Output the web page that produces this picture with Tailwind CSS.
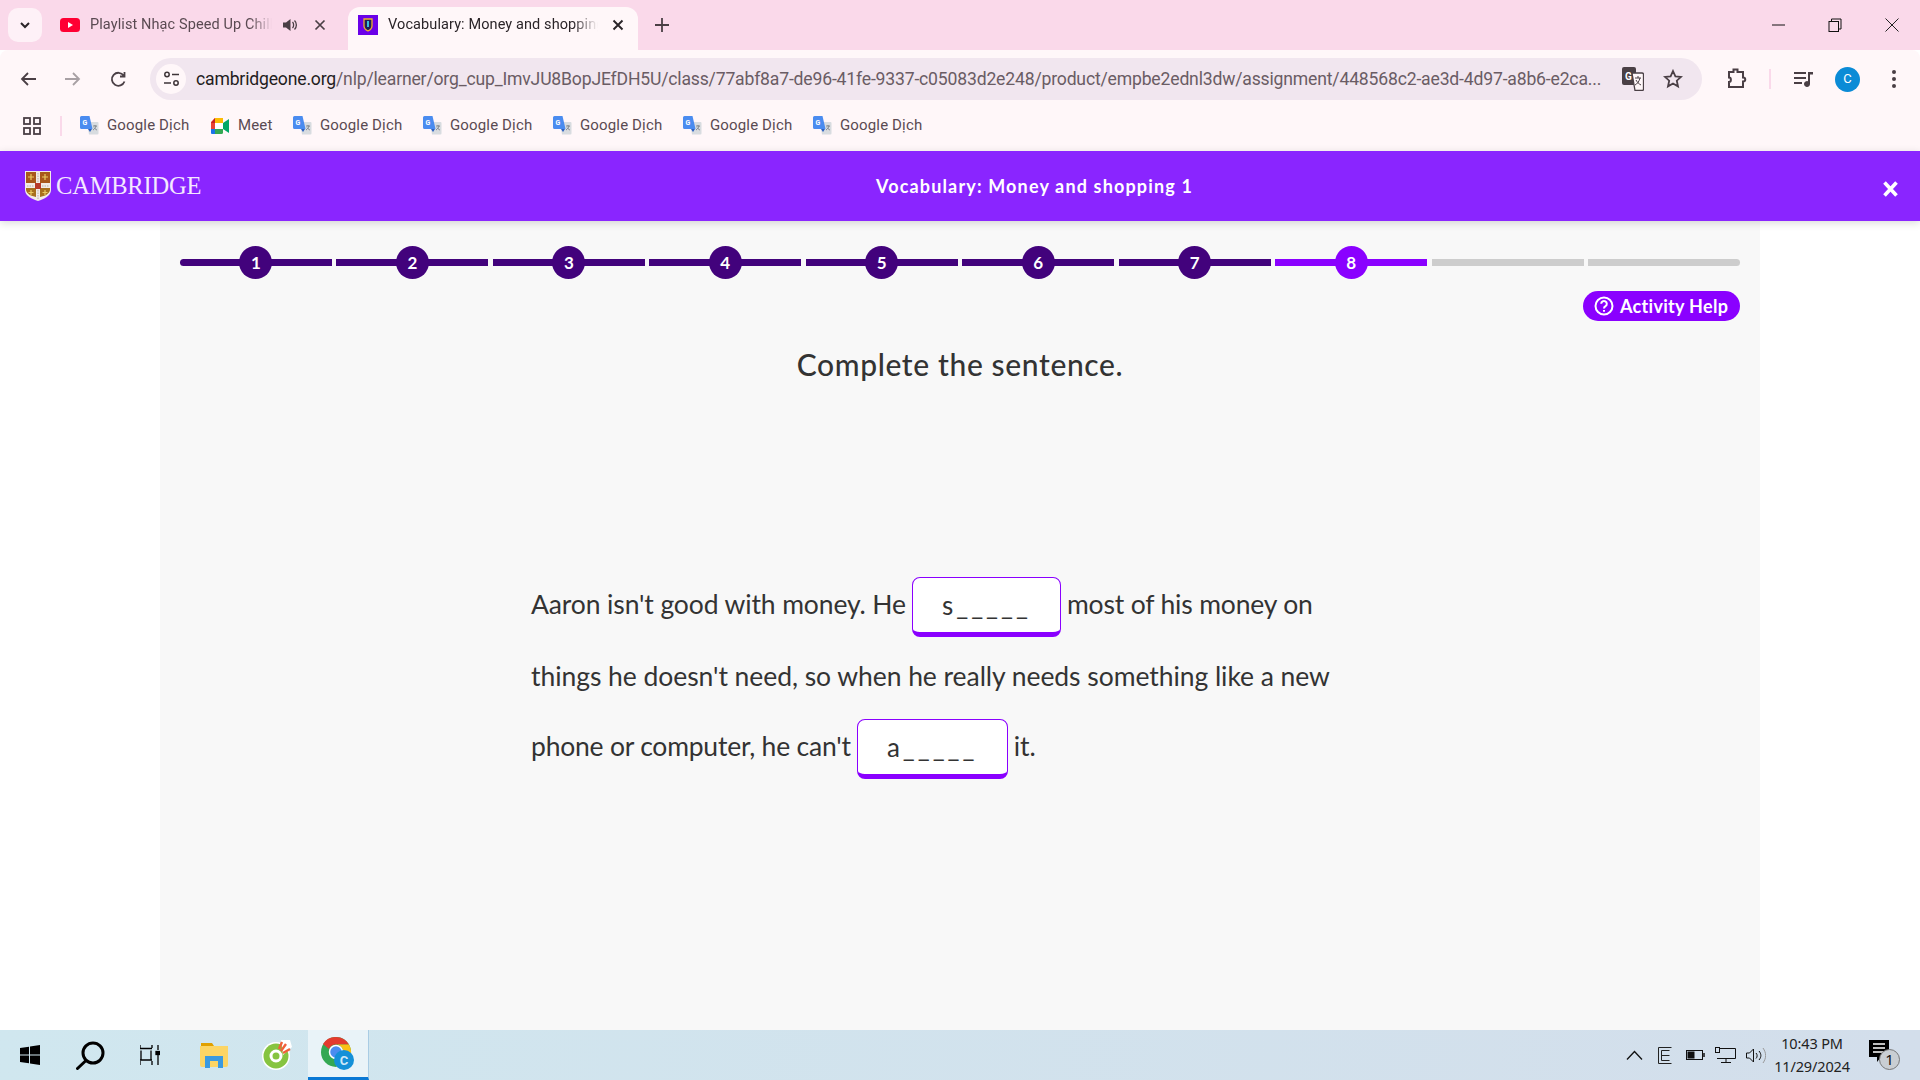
<!DOCTYPE html>
<html><head><meta charset="utf-8"><title>Vocabulary</title>
<script src="https://cdn.jsdelivr.net/npm/@tailwindcss/browser@4"></script></head>
<body class="bg-white overflow-hidden font-['Roboto',sans-serif]">
<div class="w-[1920px] h-[1080px] flex flex-col overflow-hidden">

<!-- tab strip -->
<div class="h-[50px] bg-[#fad9ea] flex items-end relative shrink-0">
  <div class="absolute left-[8px] top-[8px] w-[34px] h-[34px] rounded-[10px] bg-[#fef1f7] flex items-center justify-center">
    <svg width="12" height="12" viewBox="0 0 12 12" fill="none" stroke="#2a2428" stroke-width="2"><path d="M2 4l4 4 4-4"/></svg>
  </div>
  <div class="ml-[60px] w-[280px] h-[43px] pb-[7px] flex items-center text-[14.5px] tracking-[.1px] text-[#5a4a52]">
    <svg width="20" height="14" viewBox="0 0 20 14"><rect width="20" height="14" rx="3.5" fill="#ff0033"/><path d="M8 4l5 3-5 3z" fill="#fff"/></svg>
    <span class="ml-[10px] w-[182px] whitespace-nowrap overflow-hidden [mask-image:linear-gradient(90deg,#000_88%,transparent)]">Playlist Nhạc Speed Up Chill</span>
    <svg class="ml-[10px]" width="16" height="16" viewBox="0 0 16 16" fill="#4a3f45"><path d="M1 5.5h3L8.500 2v12L4 10.500H1z"/><path d="M10.500 5c1.500 1.500 1.500 4.500 0 6M12.500 3.500c2.500 2.500 2.500 6.500 0 9" fill="none" stroke="#4a3f45" stroke-width="1.300"/></svg>
    <svg class="ml-[16px]" width="12" height="12" viewBox="0 0 12 12" stroke="#4a3f45" stroke-width="1.700"><path d="M1.500 1.500l9 9M10.500 1.500l-9 9"/></svg>
  </div>
  <div class="ml-[8px] w-[290px] h-[43px] pb-[7px] bg-[#fff7f9] rounded-t-[12px] flex items-center text-[14.5px] tracking-[.1px] text-[#2a2428] pl-[10px]">
    <svg width="20" height="20" viewBox="0 0 20 20"><rect width="20" height="20" fill="#6a00e8"/><path d="M6 4h8v7c0 3-2 4-4 5-2-1-4-2-4-5z" fill="#1e1e5a" stroke="#f0b030" stroke-width="1.300"/><path d="M10 6v6" stroke="#38c0d8" stroke-width="2"/></svg>
    <span class="ml-[10px] w-[210px] whitespace-nowrap overflow-hidden [mask-image:linear-gradient(90deg,#000_88%,transparent)]">Vocabulary: Money and shopping 1</span>
    <svg class="ml-[14px]" width="12" height="12" viewBox="0 0 12 12" stroke="#2a2428" stroke-width="1.900"><path d="M1.500 1.500l9 9M10.500 1.500l-9 9"/></svg>
  </div>
  <svg class="ml-[17px] mb-[18px]" width="14" height="14" viewBox="0 0 14 14" stroke="#4a3f45" stroke-width="1.800"><path d="M7 0v14M0 7h14"/></svg>
  <div class="absolute right-0 top-0 h-[50px] flex items-center">
    <div class="w-[55px] flex justify-center"><svg width="13" height="2" viewBox="0 0 13 2"><path d="M0 1h13" stroke="#111" stroke-width="1"/></svg></div>
    <div class="w-[58px] flex justify-center"><svg width="14" height="14" viewBox="0 0 14 14" fill="none" stroke="#111"><rect x="1" y="3.500" width="9.500" height="10"/><path d="M3.500 3.500V1h9.500v10h-2.500"/></svg></div>
    <div class="w-[56px] flex justify-center"><svg width="14" height="14" viewBox="0 0 14 14" stroke="#222" stroke-width="1"><path d="M.5.500l13 13M13.500.500l-13 13"/></svg></div>
  </div>
</div>

<!-- toolbar -->
<div class="h-[58px] bg-[#fff7f9] rounded-t-[8px] flex items-center relative shrink-0">
  <svg class="ml-[20px]" width="16" height="16" viewBox="0 0 16 16" fill="none" stroke="#4a3f45" stroke-width="1.800"><path d="M16 8H2M8 2L2 8l6 6"/></svg>
  <svg class="ml-[29px]" width="16" height="16" viewBox="0 0 16 16" fill="none" stroke="#a8a0a4" stroke-width="1.800"><path d="M0 8h14M8 2l6 6-6 6"/></svg>
  <svg class="ml-[29px]" width="17" height="17" viewBox="0 0 17 17" fill="none" stroke="#4a3f45" stroke-width="1.800"><path d="M14.500 10.500a6.500 6.500 0 1 1-.800-6M14.500 1v4.500H10"/></svg>
  <div class="ml-[23px] w-[1552px] h-[42px] rounded-full bg-[#f1e6ef] flex items-center">
    <div class="ml-[6px] w-[30px] h-[30px] rounded-full bg-[#fff7f9] flex items-center justify-center">
      <svg width="17" height="16" viewBox="0 0 17 16" fill="none" stroke="#3e3438" stroke-width="1.500"><circle cx="4" cy="3.500" r="2.200"/><path d="M9 3.500h7M1 12h7"/><circle cx="13" cy="12" r="2.200"/></svg>
    </div>
    <span class="ml-[10px] w-[1410px] text-[17.6px] leading-[42px] tracking-[-.18px] text-[#6a5c64] whitespace-nowrap"><span class="text-[#231c20]">cambridgeone.org</span>/nlp/learner/org_cup_ImvJU8BopJEfDH5U/class/77abf8a7-de96-41fe-9337-c05083d2e248/product/empbe2ednl3dw/assignment/448568c2-ae3d-4d97-a8b6-e2ca...</span>
    <svg class="ml-[16px]" width="22" height="24" viewBox="0 0 22 24"><rect x="0" y="0" width="14" height="18" rx="2" fill="#4a4045"/><text x="3" y="13" font-size="10" font-weight="700" fill="#fff" font-family="Roboto">G</text><path d="M10 6h10a1.500 1.500 0 0 1 1.500 1.500V22a1.500 1.500 0 0 1-1.500 1.500h-7z" fill="#fff7f9" stroke="#4a4045" stroke-width="1.300"/><path d="M13 11h6M16 9v2M18 11c-1 4-3 6-5 7M14 13c1 2 3 4 5 5" stroke="#4a4045" fill="none"/></svg>
    <svg class="ml-[19px]" width="20" height="20" viewBox="0 0 20 20" fill="none" stroke="#4a3f45" stroke-width="1.800"><path d="M10 2l2.400 5.300 5.600.600-4.200 3.800 1.200 5.700-5-2.900-5 2.900 1.200-5.700L2 7.900l5.600-.600z"/></svg>
  </div>
  <svg class="ml-[25px]" width="20" height="22" viewBox="0 0 20 22" fill="none" stroke="#4a3f45" stroke-width="2"><path d="M2 4h4.500V1.500h4V4H16v5.500c3 0 3 4 0 4V19H2v-5c2.500 0 2.500-4.500 0-4.500z"/></svg>
  <div class="ml-[22px] w-[2px] h-[20px] bg-[#fad9ea]"></div>
  <svg class="ml-[23px]" width="19" height="17" viewBox="0 0 19 17" fill="#4a3f45"><path d="M0 1h12v2H0zM0 6h12v2H0zM0 11h8v2H0z"/><path d="M14 1h5v2.500h-3V13a3 3 0 1 1-2-2.800z"/></svg>
  <div class="ml-[22px] w-[25px] h-[25px] rounded-full bg-[#0b8bd6] text-white text-[13px] flex items-center justify-center">C</div>
  <svg class="ml-[32px]" width="4" height="18" viewBox="0 0 4 18" fill="#4a3f45"><circle cx="2" cy="2" r="2"/><circle cx="2" cy="9" r="2"/><circle cx="2" cy="16" r="2"/></svg>
</div>

<!-- bookmarks -->
<div class="h-[43px] pb-[8px] bg-[#fff7f9] flex items-center text-[15px] tracking-[.15px] text-[#5a4a52] shrink-0">
  <svg class="ml-[23px]" width="18" height="18" viewBox="0 0 18 18" fill="none" stroke="#4a3f45" stroke-width="1.800"><rect x="1" y="1" width="6" height="6"/><rect x="11" y="1" width="6" height="6"/><rect x="1" y="11" width="6" height="6"/><rect x="11" y="11" width="6" height="6"/></svg>
  <div class="ml-[19px] w-[2px] h-[20px] bg-[#fad9ea]"></div>
  <div class="ml-[18px] flex items-center gap-[8px]"><svg width="19" height="19" viewBox="0 0 19 19"><path d="M7 6h10.500a1 1 0 0 1 1 1v10.500a1 1 0 0 1-1 1H9z" fill="#d8dce0"/><path d="M1.500 0h8l3 13H1.500a1.500 1.500 0 0 1-1.500-1.500v-10A1.500 1.500 0 0 1 1.500 0z" fill="#4a8cf0"/><text x="2.500" y="9" font-size="7" font-weight="700" fill="#fff" font-family="Roboto">G</text><path d="M8 13h4l-2 3z" fill="#2a5fc0"/><path d="M13 10h4M15 9v1M16 10c-.500 2-1.500 3-3 4M14 11.500c.700 1 1.500 2 3 2.500" stroke="#70767c" stroke-width=".8" fill="none"/></svg><span class="w-[82px] whitespace-nowrap">Google Dịch</span></div>
  <div class="ml-[22px] flex items-center gap-[9px]"><svg width="18" height="16" viewBox="0 0 18 16"><path d="M0 4l4-4h8v5H4v6H0z" fill="#ea4335"/><path d="M4 0v5H0z" fill="#c5221f"/><path d="M4 0h8v5H4z" fill="#fbbc04"/><path d="M0 11h4v5H1a1 1 0 0 1-1-1z" fill="#1a73e8"/><path d="M4 11h8v3.500a1.500 1.500 0 0 1-1.500 1.500H4z" fill="#34a853"/><path d="M12 5v6l6 4V1z" fill="#00a866"/><path d="M4 5h8v6H4z" fill="#fff"/></svg><span class="w-[34px]">Meet</span></div>
  <div class="ml-[21px] flex items-center gap-[8px]"><svg width="19" height="19" viewBox="0 0 19 19"><path d="M7 6h10.500a1 1 0 0 1 1 1v10.500a1 1 0 0 1-1 1H9z" fill="#d8dce0"/><path d="M1.500 0h8l3 13H1.500a1.500 1.500 0 0 1-1.500-1.500v-10A1.500 1.500 0 0 1 1.500 0z" fill="#4a8cf0"/><text x="2.500" y="9" font-size="7" font-weight="700" fill="#fff" font-family="Roboto">G</text><path d="M8 13h4l-2 3z" fill="#2a5fc0"/><path d="M13 10h4M15 9v1M16 10c-.500 2-1.500 3-3 4M14 11.500c.700 1 1.500 2 3 2.500" stroke="#70767c" stroke-width=".8" fill="none"/></svg><span class="w-[82px] whitespace-nowrap">Google Dịch</span></div>
  <div class="ml-[21px] flex items-center gap-[8px]"><svg width="19" height="19" viewBox="0 0 19 19"><path d="M7 6h10.500a1 1 0 0 1 1 1v10.500a1 1 0 0 1-1 1H9z" fill="#d8dce0"/><path d="M1.500 0h8l3 13H1.500a1.500 1.500 0 0 1-1.500-1.500v-10A1.500 1.500 0 0 1 1.500 0z" fill="#4a8cf0"/><text x="2.500" y="9" font-size="7" font-weight="700" fill="#fff" font-family="Roboto">G</text><path d="M8 13h4l-2 3z" fill="#2a5fc0"/><path d="M13 10h4M15 9v1M16 10c-.500 2-1.500 3-3 4M14 11.500c.700 1 1.500 2 3 2.500" stroke="#70767c" stroke-width=".8" fill="none"/></svg><span class="w-[82px] whitespace-nowrap">Google Dịch</span></div>
  <div class="ml-[21px] flex items-center gap-[8px]"><svg width="19" height="19" viewBox="0 0 19 19"><path d="M7 6h10.500a1 1 0 0 1 1 1v10.500a1 1 0 0 1-1 1H9z" fill="#d8dce0"/><path d="M1.500 0h8l3 13H1.500a1.500 1.500 0 0 1-1.500-1.500v-10A1.500 1.500 0 0 1 1.500 0z" fill="#4a8cf0"/><text x="2.500" y="9" font-size="7" font-weight="700" fill="#fff" font-family="Roboto">G</text><path d="M8 13h4l-2 3z" fill="#2a5fc0"/><path d="M13 10h4M15 9v1M16 10c-.500 2-1.500 3-3 4M14 11.500c.700 1 1.500 2 3 2.500" stroke="#70767c" stroke-width=".8" fill="none"/></svg><span class="w-[82px] whitespace-nowrap">Google Dịch</span></div>
  <div class="ml-[21px] flex items-center gap-[8px]"><svg width="19" height="19" viewBox="0 0 19 19"><path d="M7 6h10.500a1 1 0 0 1 1 1v10.500a1 1 0 0 1-1 1H9z" fill="#d8dce0"/><path d="M1.500 0h8l3 13H1.500a1.500 1.500 0 0 1-1.500-1.500v-10A1.500 1.500 0 0 1 1.500 0z" fill="#4a8cf0"/><text x="2.500" y="9" font-size="7" font-weight="700" fill="#fff" font-family="Roboto">G</text><path d="M8 13h4l-2 3z" fill="#2a5fc0"/><path d="M13 10h4M15 9v1M16 10c-.500 2-1.500 3-3 4M14 11.500c.700 1 1.500 2 3 2.500" stroke="#70767c" stroke-width=".8" fill="none"/></svg><span class="w-[82px] whitespace-nowrap">Google Dịch</span></div>
  <div class="ml-[21px] flex items-center gap-[8px]"><svg width="19" height="19" viewBox="0 0 19 19"><path d="M7 6h10.500a1 1 0 0 1 1 1v10.500a1 1 0 0 1-1 1H9z" fill="#d8dce0"/><path d="M1.500 0h8l3 13H1.500a1.500 1.500 0 0 1-1.500-1.500v-10A1.500 1.500 0 0 1 1.500 0z" fill="#4a8cf0"/><text x="2.500" y="9" font-size="7" font-weight="700" fill="#fff" font-family="Roboto">G</text><path d="M8 13h4l-2 3z" fill="#2a5fc0"/><path d="M13 10h4M15 9v1M16 10c-.500 2-1.500 3-3 4M14 11.500c.700 1 1.500 2 3 2.500" stroke="#70767c" stroke-width=".8" fill="none"/></svg><span class="w-[82px] whitespace-nowrap">Google Dịch</span></div>
</div>

<!-- app header -->
<div class="h-[70px] bg-[#8a25ff] shrink-0 relative z-10 shadow-[0_2px_8px_rgba(0,0,0,0.15)] flex items-center font-['Lato',sans-serif]">
  <svg class="ml-[25px]" width="26" height="30" viewBox="0 0 26 30"><path d="M0 0h26v19c0 6-7 9-13 11C7 28 0 25 0 19z" fill="#f2ece6"/><rect x="1" y="1" width="10" height="11" fill="#a8581c"/><rect x="15" y="1" width="10" height="11" fill="#a8581c"/><path d="M1 17h10v9c-5-1-9-3-10-7z" fill="#a8701c"/><path d="M15 17h10v2c-1 4-5 6-10 7z" fill="#a8701c"/><rect x="10" y="12" width="6" height="6" fill="#b83a2a"/><path d="M6 3v6M3 6h6M20 3v6M17 6h6M6 19v5M3.500 21.500h5M20 19v5M17.500 21.500h5" stroke="#e8c860" stroke-width="1.200"/><path d="M13 2v9M13 19v9M2 15h7M17 15h7" stroke="#b8b0a8" stroke-width="1" stroke-dasharray="1.500 1"/></svg>
  <span class="ml-[5px] w-[150px] font-['Liberation_Serif',serif] text-[24.5px] leading-none text-[#f4e8ff] tracking-[-.2px]">CAMBRIDGE</span>
  <span class="absolute left-[876px] top-[23px] text-[18px] leading-[24px] font-bold text-white whitespace-nowrap tracking-[1.15px]">Vocabulary: Money and shopping 1</span>
  <svg class="absolute left-[1883px] top-[30px]" width="15" height="16" viewBox="0 0 15 16" stroke="#fff" stroke-width="3.600"><path d="M1.500 1.500l12 13M13.500 1.500l-12 13"/></svg>
</div>

<!-- main -->
<div class="flex-1 min-h-0 flex justify-center bg-white font-['Lato',sans-serif]">
  <div class="w-[1600px] bg-[#f8f8f8] px-[20px] pt-[25px]">
    <div class="flex gap-[4.8px] items-center h-[33px]">
      <div class="relative flex-1 h-[7px] bg-[#42027c] rounded-l-full flex items-center justify-center"><div class="w-[33px] h-[33px] rounded-full bg-[#42027c] text-white text-[17px] font-bold flex items-center justify-center">1</div></div>
      <div class="relative flex-1 h-[7px] bg-[#42027c] flex items-center justify-center"><div class="w-[33px] h-[33px] rounded-full bg-[#42027c] text-white text-[17px] font-bold flex items-center justify-center">2</div></div>
      <div class="relative flex-1 h-[7px] bg-[#42027c] flex items-center justify-center"><div class="w-[33px] h-[33px] rounded-full bg-[#42027c] text-white text-[17px] font-bold flex items-center justify-center">3</div></div>
      <div class="relative flex-1 h-[7px] bg-[#42027c] flex items-center justify-center"><div class="w-[33px] h-[33px] rounded-full bg-[#42027c] text-white text-[17px] font-bold flex items-center justify-center">4</div></div>
      <div class="relative flex-1 h-[7px] bg-[#42027c] flex items-center justify-center"><div class="w-[33px] h-[33px] rounded-full bg-[#42027c] text-white text-[17px] font-bold flex items-center justify-center">5</div></div>
      <div class="relative flex-1 h-[7px] bg-[#42027c] flex items-center justify-center"><div class="w-[33px] h-[33px] rounded-full bg-[#42027c] text-white text-[17px] font-bold flex items-center justify-center">6</div></div>
      <div class="relative flex-1 h-[7px] bg-[#42027c] flex items-center justify-center"><div class="w-[33px] h-[33px] rounded-full bg-[#42027c] text-white text-[17px] font-bold flex items-center justify-center">7</div></div>
      <div class="relative flex-1 h-[7px] bg-[#8a00ff] flex items-center justify-center"><div class="w-[33px] h-[33px] rounded-full bg-[#8a00ff] text-white text-[17px] font-bold flex items-center justify-center">8</div></div>
      <div class="flex-1 h-[7px] bg-[#cdcdcd]"></div>
      <div class="flex-1 h-[7px] bg-[#cdcdcd] rounded-r-full"></div>
    </div>
    <div class="flex justify-end mt-[12px]">
      <div class="w-[157px] h-[30px] rounded-full bg-[#8a00ff] text-white flex items-center pl-[11px]">
        <svg width="20" height="20" viewBox="0 0 20 20" fill="none" stroke="#fff" stroke-width="2"><circle cx="10" cy="10" r="8.500"/><path d="M7.200 7.800a2.800 2.800 0 1 1 4.300 2.400c-1 .6-1.500 1-1.500 2.200"/><path d="M10 14v1.800"/></svg>
        <span class="ml-[6px] text-[18px] font-bold leading-none whitespace-nowrap tracking-[.3px]">Activity Help</span>
      </div>
    </div>
    <h1 class="mt-[23px] text-center text-[30px] leading-[40px] font-medium text-[#333] tracking-[.63px]">Complete the sentence.</h1>
    <div class="mt-[193px] ml-[351px] text-[26.500px] text-[#333]">
      <div class="h-[60px] flex items-center whitespace-nowrap"><span class="mb-[4px] tracking-[-.12px]">Aaron isn't good with money. He</span>
        <div class="ml-[6px] w-[149px] h-[60px] bg-white rounded-[8px] border border-[#8a00ff] border-b-[5px] flex items-center justify-center text-[26px] tracking-[3px]">s_____</div>
        <span class="ml-[6px] mb-[4px] tracking-[-.17px]">most of his money on</span></div>
      <div class="h-[12px]"></div>
      <div class="h-[60px] flex items-center whitespace-nowrap"><span class="mb-[4px] tracking-[-.055px]">things he doesn't need, so when he really needs something like a new</span></div>
      <div class="h-[10px]"></div>
      <div class="h-[60px] flex items-center whitespace-nowrap"><span class="mb-[4px] tracking-[-.22px]">phone or computer, he can't</span>
        <div class="ml-[6px] w-[151px] h-[60px] bg-white rounded-[8px] border border-[#8a00ff] border-b-[5px] flex items-center justify-center text-[26px] tracking-[3px]">a_____</div>
        <span class="ml-[6px] mb-[4px]">it.</span></div>
    </div>
  </div>
</div>

<!-- taskbar -->
<div class="h-[50px] shrink-0 bg-gradient-to-r from-[#d0e7ef] to-[#d3deeb] flex items-center relative font-['Noto_Sans',sans-serif]">
  <svg class="ml-[20px]" width="20" height="20" viewBox="0 0 20 20" fill="#000"><path d="M0 3l9-1.300V9.500H0zM10 1.500L20 0v9.500H10zM0 10.500h9v7.800L0 17zM10 10.500h10V20l-10-1.500z"/></svg>
  <svg class="ml-[36px]" width="29" height="29" viewBox="0 0 29 29" fill="none" stroke="#000" stroke-width="3"><circle cx="17" cy="12" r="10"/><path d="M10 19.500L1.500 27.500" stroke-linecap="round"/></svg>
  <svg class="ml-[35px]" width="20" height="20" viewBox="0 0 20 20" fill="none" stroke="#000" stroke-width="1.300"><path d="M0 0v3M12 0v3M0 3.500h12M1 5.500v9M11 5.500v9M0 15h12M0 16v4M12 16v4M18 0v5M18 10v10"/><rect x="16" y="6.500" width="3.500" height="3" fill="#000"/></svg>
  <svg class="ml-[40px]" width="28" height="25" viewBox="0 0 28 25"><path d="M1 0h11l2 3H1z" fill="#e0a000"/><path d="M0 3h28v19a2 2 0 0 1-2 2H2a2 2 0 0 1-2-2z" fill="#fcd565"/><path d="M5 25V13h18v12h-5v-7h-8v7z" fill="#3b9ae0"/></svg>
  <svg class="ml-[34px]" width="30" height="30" viewBox="0 0 30 30"><circle cx="14" cy="16" r="14" fill="#fff"/><circle cx="14" cy="16" r="12.500" fill="#86c440"/><circle cx="14" cy="16" r="5" fill="none" stroke="#fff" stroke-width="3"/><path d="M19 0l9 0 2 7-9 8z" fill="#fff"/><path d="M20 2l-3 7M24 4l-5 7M28 9l-7 4" stroke="#f0603a" stroke-width="2.400"/></svg>
  <div class="ml-[16px] w-[61px] h-[50px] bg-[#e9f3f8] border-b-[3px] border-[#0a78d4] border-r border-r-[#a9cce4] flex items-center justify-center relative">
    <svg width="34" height="34" viewBox="0 0 34 34"><circle cx="15" cy="15" r="15" fill="#34a853"/><path d="M15 0a15 15 0 0 1 13 7.500H15a7.500 7.500 0 0 0-7 4.500L2 7A15 15 0 0 1 15 0z" fill="#e33b2e"/><path d="M28 7.500A15 15 0 0 1 15 30l6.500-11.500A7.500 7.500 0 0 0 15 7.500z" fill="#fbc116"/><circle cx="15" cy="15" r="6.500" fill="#4a8cf0" stroke="#fff" stroke-width="1.500"/><circle cx="23" cy="23" r="10" fill="#1490d8"/><text x="23" y="28" text-anchor="middle" font-size="13" font-weight="700" fill="#cde8f8" font-family="Roboto">C</text></svg>
  </div>
  <div class="absolute right-0 top-0 h-[50px] flex items-center">
    <svg width="17" height="10" viewBox="0 0 17 10" fill="none" stroke="#111" stroke-width="1.300"><path d="M1 9.500l7.500-8 7.500 8"/></svg>
    <svg class="ml-[15px]" width="14" height="17" viewBox="0 0 14 17" fill="none" stroke="#222"><path d="M.5.500h13M.5.500v16h13M3.500 3.500v10M3.500 3.500h8M3.500 8.500h8M3.500 13.500h8"/></svg>
    <svg class="ml-[14px]" width="19" height="10" viewBox="0 0 19 10" fill="none" stroke="#111"><rect x=".5" y=".5" width="16" height="9"/><rect x="2" y="2" width="6" height="6" fill="#111"/><path d="M18 3v4" stroke-width="1.500"/></svg>
    <svg class="ml-[10px]" width="21" height="17" viewBox="0 0 21 17" fill="none" stroke="#111"><path d="M5 1.500h15.500v10H2M11 11.500v4M6 15.500h10"/><rect x=".5" y=".5" width="4" height="5" fill="#d3deeb"/></svg>
    <svg class="ml-[10px]" width="20" height="17" viewBox="0 0 20 17" fill="none" stroke="#111"><path d="M.5 6h3l4-4v13l-4-4h-3z"/><path d="M10 6c1.500 1.500 1.500 4 0 5.500M13 4c2.500 3 2.500 6 0 9"/><path d="M17 1c3.500 5 3.500 10 0 15" stroke="#999"/></svg>
    <div class="ml-[6px] w-[80px] text-[14.500px] leading-[23px] text-center text-[#222] tracking-[-.15px]">10:43 PM<br>11/29/2024</div>
    <div class="ml-[17px] mr-[20px] relative w-[31px] h-[30px]">
      <svg width="22" height="24" viewBox="0 0 22 24" fill="#000"><path d="M0 0h20v17H12l-4 5v-5H0z"/><path d="M4 4h12M4 8h12M4 12h12" stroke="#fff" stroke-width="1.300"/></svg>
      <div class="absolute right-0 bottom-0 w-[21px] h-[21px] rounded-full bg-[#c9ced3] border border-[#777] text-[15px] leading-[19px] text-center text-[#111]">1</div>
    </div>
  </div>
</div>
</div>
</body></html>
